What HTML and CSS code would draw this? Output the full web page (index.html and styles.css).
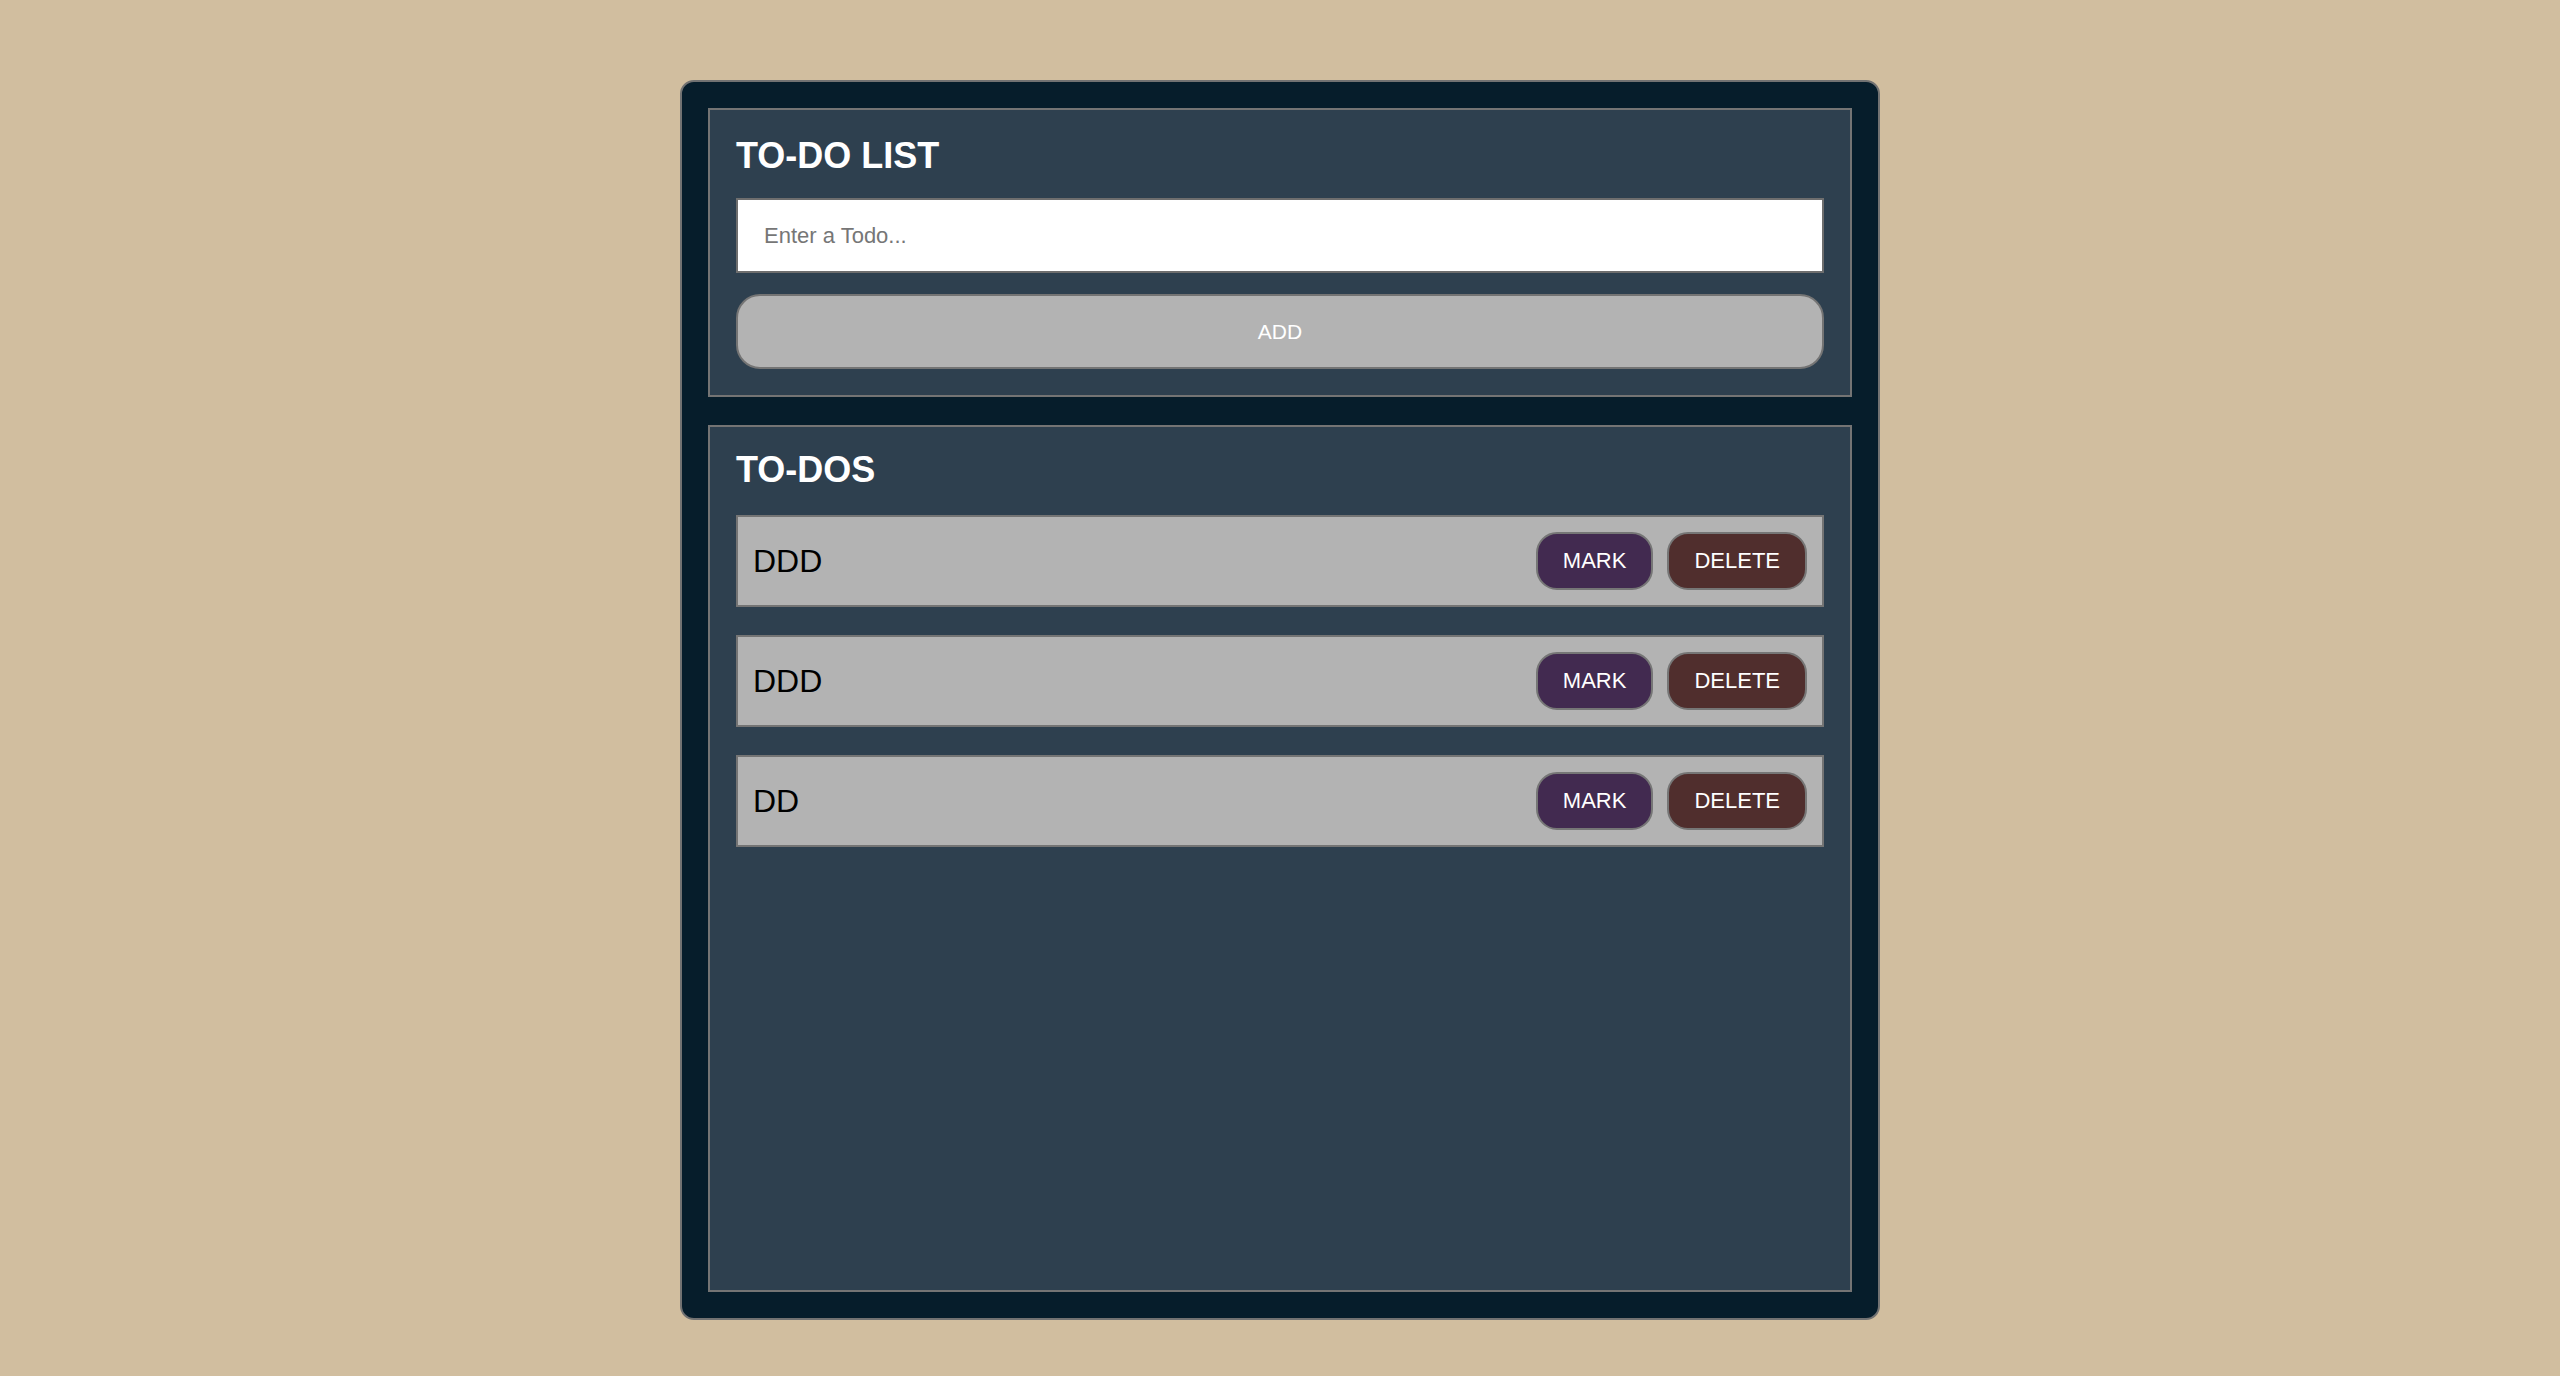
FILE: index.html
```html
<!DOCTYPE html>
<html lang="en">
<head>
<meta charset="utf-8">
<title>To-Do List</title>
<link rel="stylesheet" href="styles.css">
</head>
<body>
<main class="app">
  <section class="panel panel-form">
    <h1 class="panel-title">TO-DO LIST</h1>
    <form class="todo-form" onsubmit="return false;">
      <input class="todo-input" type="text" placeholder="Enter a Todo...">
      <button class="add-btn" type="button">ADD</button>
    </form>
  </section>
  <section class="panel panel-list">
    <h2 class="panel-title list-title">TO-DOS</h2>
    <ul class="todo-list">
      <li class="todo-item">
        <span class="todo-text">DDD</span>
        <div class="todo-actions">
          <button class="btn btn-mark" type="button">MARK</button>
          <button class="btn btn-delete" type="button">DELETE</button>
        </div>
      </li>
      <li class="todo-item">
        <span class="todo-text">DDD</span>
        <div class="todo-actions">
          <button class="btn btn-mark" type="button">MARK</button>
          <button class="btn btn-delete" type="button">DELETE</button>
        </div>
      </li>
      <li class="todo-item">
        <span class="todo-text">DD</span>
        <div class="todo-actions">
          <button class="btn btn-mark" type="button">MARK</button>
          <button class="btn btn-delete" type="button">DELETE</button>
        </div>
      </li>
    </ul>
  </section>
</main>
</body>
</html>
```
FILE: styles.css
```css
* {
  box-sizing: border-box;
}

html, body {
  margin: 0;
  padding: 0;
}

body {
  background: #d1be9f;
  font-family: "Liberation Sans", Arial, Helvetica, sans-serif;
  padding-top: 80px;
}

.app {
  width: 1200px;
  height: 1240px;
  margin: 0 auto;
  background: #061d2b;
  border: 2px solid #727272;
  border-radius: 14px;
  padding: 26px;
  display: flex;
  flex-direction: column;
  gap: 28px;
}

.panel {
  background: #2e404f;
  border: 2px solid #747474;
  padding: 25px 26px 26px;
}

.panel-list {
  flex: 1;
  padding-top: 22px;
}

.panel-title {
  margin: 0;
  color: #ffffff;
  font-size: 36px;
  font-weight: 700;
  line-height: 42px;
}

.todo-form {
  margin-top: 21px;
  display: flex;
  flex-direction: column;
  gap: 21px;
}

.todo-input {
  height: 75px;
  width: 100%;
  border: 2px solid #6e6e6e;
  background: #ffffff;
  padding: 0 26px;
  font-family: inherit;
  font-size: 22px;
  color: #333;
  outline: none;
}

.todo-input::placeholder {
  color: #767676;
}

.add-btn {
  height: 75px;
  width: 100%;
  background: #b3b3b3;
  border: 2px solid #747474;
  border-radius: 24px;
  color: #ffffff;
  font-family: inherit;
  font-size: 21px;
  cursor: pointer;
}

.todo-list {
  list-style: none;
  margin: 24px 0 0;
  padding: 0;
  display: flex;
  flex-direction: column;
  gap: 28px;
}

.todo-item {
  height: 92px;
  background: #b3b3b3;
  border: 2px solid #747474;
  padding: 0 15px;
  display: flex;
  align-items: center;
  justify-content: space-between;
}

.todo-text {
  font-size: 32px;
  color: #000000;
}

.todo-actions {
  display: flex;
  gap: 14px;
}

.btn {
  height: 58px;
  padding: 0 25px;
  border: 2px solid #767676;
  border-radius: 21px;
  color: #ffffff;
  font-family: inherit;
  font-size: 22px;
  cursor: pointer;
}

.btn-mark {
  background: #422a50;
}

.btn-delete {
  background: #502e2d;
}
```
